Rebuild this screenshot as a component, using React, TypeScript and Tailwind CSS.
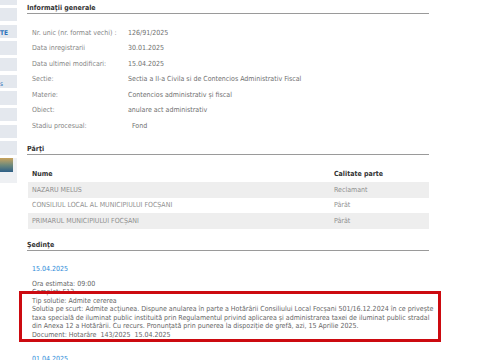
import React from "react";

const FONT = "font-['DejaVu_Sans_Condensed','Liberation_Sans',sans-serif]";

function SideBar() {
  const boxes = Array.from({ length: 10 });
  return (
    <div className="w-[17px] shrink-0 flex flex-col">
      <div className="flex flex-col gap-[3.17px] mt-[-8.7px]">
        {boxes.map((_, i) => (
          <div key={i} className="h-[13.5px] bg-[#e4e8ee] relative overflow-hidden">
            {i === 2 && (
              <span className="absolute left-0 top-[5.5px] text-[6.5px] leading-[7px] font-bold text-[#2f74bb]">TE</span>
            )}
            {i === 5 && (
              <span className="absolute left-0 top-[6px] text-[6.5px] leading-[7px] text-[#2f74bb]">s</span>
            )}
          </div>
        ))}
      </div>
      <div className="mt-[3px] h-[25px] bg-[#eef0f3] flex">
        <div className="w-[13px] h-[14px] bg-gradient-to-b from-[#c8a25a] via-[#6f8a7a] to-[#2d5f86]" />
      </div>
    </div>
  );
}

function Heading({ children, pt }: { children: React.ReactNode; pt: string }) {
  return (
    <div className={`${pt} border-b border-[#9a9a9a] text-[7px] leading-[10px] font-bold text-[#333]`}>
      {children}
    </div>
  );
}

const infoRows: [string, string, string?][] = [
  ["Nr. unic (nr. format vechi) :", "126/91/2025"],
  ["Data inregistrarii", "30.01.2025"],
  ["Data ultimei modificari:", "15.04.2025"],
  ["Sectie:", "Sectia a II-a Civila si de Contencios Administrativ Fiscal"],
  ["Materie:", "Contencios administrativ și fiscal"],
  ["Obiect:", "anulare act administrativ"],
  ["Stadiu procesual:", "Fond", "pl-[4px]"],
];

const parti: [string, string][] = [
  ["NAZARU MELUS", "Reclamant"],
  ["CONSILIUL LOCAL AL MUNICIPIULUI FOCȘANI", "Pârât"],
  ["PRIMARUL MUNICIPIULUI FOCȘANI", "Pârât"],
];

export default function App() {
  return (
    <div className={`w-[480px] h-[360px] overflow-hidden bg-white flex ${FONT}`}>
      <SideBar />
      <div className="ml-[10px] w-[402px] shrink-0 relative">
        <Heading pt="pt-[3px]">Informaţii generale</Heading>
        <div className="mt-[11px] pl-[5px] text-[7px] text-[#858585]">
          {infoRows.map(([l, v, extra]) => (
            <div key={l} className="h-[15.5px] flex items-center whitespace-nowrap">
              <div className="w-[96px]">{l}</div>
              <div className={`text-[#6f6f6f] ${extra ?? ""}`}>{v}</div>
            </div>
          ))}
        </div>
        <Heading pt="pt-[10px]">Părţi</Heading>
        <div className="mt-[12px] text-[7px] whitespace-nowrap">
          <div className="h-[15.5px] flex items-center font-bold text-[#333] pl-[4px] ml-[1px]">
            <div className="w-[302px]">Nume</div>
            <div>Calitate parte</div>
          </div>
          {parti.map(([n, c], i) => (
            <div
              key={n}
              className={`h-[15.5px] flex items-center text-[#8f8f8f] pl-[4px] ml-[1px] ${i % 2 === 0 ? "bg-[#eeeeee]" : ""}`}
            >
              <div className="w-[302px]">{n}</div>
              <div>{c}</div>
            </div>
          ))}
        </div>
        <Heading pt="pt-[11px]">Şedinţe</Heading>
        <div className="pl-[5px] text-[7px] whitespace-nowrap">
          <div className="mt-[13px] leading-[10px] text-[#2d8bd8]">15.04.2025</div>
          <div className="mt-[6px] leading-[8.6px] text-[#666]">
            <div>Ora estimata: 09:00</div>
            <div>Complet: F13</div>
            <div>Tip solutie: Admite cererea</div>
            <div>Solutia pe scurt: Admite acțiunea. Dispune anularea în parte a Hotărârii Consiliului Local Focșani 501/16.12.2024 în ce privește</div>
            <div>taxa specială de iluminat public instituită prin Regulamentul privind aplicarea și administrarea taxei de iluminat public stradal</div>
            <div>din Anexa 12 a Hotărârii. Cu recurs. Pronunțată prin punerea la dispoziție de grefă, azi, 15 Aprilie 2025.</div>
            <div>Document: Hotarâre&nbsp; 143/2025&nbsp; 15.04.2025</div>
          </div>
          <div className="mt-[14px] leading-[10px] text-[#2d8bd8]">01.04.2025</div>
        </div>
        <div className="absolute left-[-8px] top-[291px] w-[422px] h-[51px] border-[3px] border-[#cc0a10] pointer-events-none" />
      </div>
    </div>
  );
}
